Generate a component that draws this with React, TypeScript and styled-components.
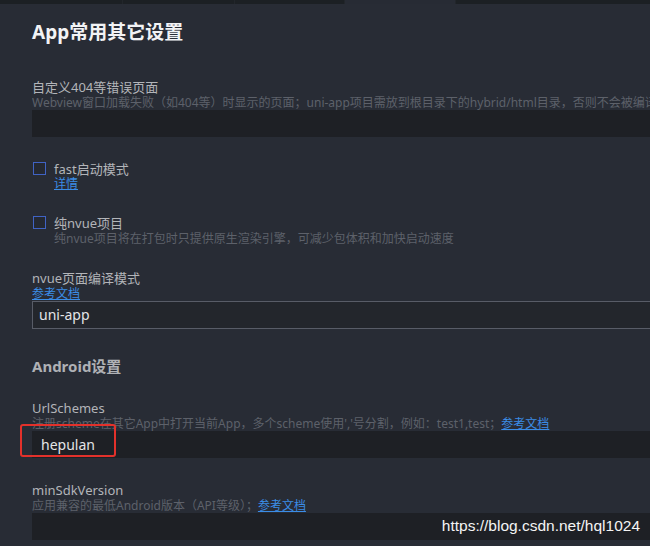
import React from "react"
import styled, { createGlobalStyle } from "styled-components"

const GlobalStyle = createGlobalStyle`
  html, body {
    margin: 0;
    padding: 0;
    background: #282c35;
    overflow: hidden;
  }
  body {
    font-family: "Noto Sans", "Noto Sans CJK SC", sans-serif;
  }
`

type Field = {
  label: string
  desc?: React.ReactNode
  value?: string
  bordered?: boolean
  marked?: boolean
}

const Link: React.FC<{ children: React.ReactNode }> = ({ children }) => <S.DocLink>{children}</S.DocLink>

const FieldBlock: React.FC<Field> = ({ label, desc, value, bordered, marked }) => (
  <S.Group>
    <S.Label>{label}</S.Label>
    {desc && <S.Desc>{desc}</S.Desc>}
    <S.InputWrap>
      <S.Input bordered={bordered}>{value}</S.Input>
      {marked && <S.RedMark />}
    </S.InputWrap>
  </S.Group>
)

const CheckItem: React.FC<{ label: string; children: React.ReactNode }> = ({ label, children }) => (
  <S.CheckRow>
    <S.Box />
    <S.CheckText>
      <S.CheckLabel>{label}</S.CheckLabel>
      {children}
    </S.CheckText>
  </S.CheckRow>
)

export default function App() {
  return (
    <>
      <GlobalStyle />
      <S.Page>
        <S.TabStrip>
          <S.Tab w={122} />
          <S.Tab w={111} />
          <S.Tab w={109} />
          <S.Tab w={110} active />
          <S.Tab w={198} />
        </S.TabStrip>
        <S.Content>
          <S.Title>App常用其它设置</S.Title>
          <FieldBlock
            label="自定义404等错误页面"
            desc="Webview窗口加载失败（如404等）时显示的页面；uni-app项目需放到根目录下的hybrid/html目录，否则不会被编译进去"
          />
          <CheckItem label="fast启动模式">
            <S.SubLink>详情</S.SubLink>
          </CheckItem>
          <CheckItem label="纯nvue项目">
            <S.Desc>纯nvue项目将在打包时只提供原生渲染引擎，可减少包体积和加快启动速度</S.Desc>
          </CheckItem>
          <FieldBlock
            label="nvue页面编译模式"
            desc={<Link>参考文档</Link>}
            value="uni-app"
            bordered
          />
          <S.Section>Android设置</S.Section>
          <FieldBlock
            label="UrlSchemes"
            desc={
              <>
                注册scheme在其它App中打开当前App，多个scheme使用','号分割，例如：test1,test；<Link>参考文档</Link>
              </>
            }
            value="hepulan"
            marked
          />
          <FieldBlock
            label="minSdkVersion"
            desc={
              <>
                应用兼容的最低Android版本（API等级）；<Link>参考文档</Link>
              </>
            }
          />
        </S.Content>
        <S.Watermark>https://blog.csdn.net/hql1024</S.Watermark>
      </S.Page>
    </>
  )
}

const S = {
  Page: styled.div`
    position: relative;
    width: 650px;
    height: 546px;
    overflow: hidden;
    background: #282c35;
  `,
  TabStrip: styled.div`
    display: flex;
    height: 4px;
  `,
  Tab: styled.div<{ w: number; active?: boolean }>`
    width: ${({ w }) => w}px;
    flex-shrink: 0;
    background: ${({ active }) => (active ? "#272b34" : "#1c2024")};
    border-right: 1px solid #22262b;
  `,
  Content: styled.div`
    display: flex;
    flex-direction: column;
    gap: 24px;
    padding: 15px 0 0 32px;
  `,
  Title: styled.h1`
    margin: 0 0 10px;
    font-size: 19px;
    line-height: 26px;
    font-weight: 700;
    color: #f2f3f5;
  `,
  Group: styled.div`
    display: flex;
    flex-direction: column;
  `,
  Label: styled.div`
    font-size: 13px;
    line-height: 16px;
    color: #b3b5b9;
    white-space: nowrap;
  `,
  Desc: styled.div`
    font-size: 12px;
    line-height: 15px;
    color: #5d616a;
    white-space: nowrap;
    overflow: hidden;
  `,
  DocLink: styled.span`
    color: #3b8de6;
    text-decoration: underline;
  `,
  InputWrap: styled.div`
    position: relative;
  `,
  Input: styled.div<{ bordered?: boolean }>`
    box-sizing: border-box;
    height: ${({ bordered }) => (bordered ? "28px" : "27px")};
    padding-left: ${({ bordered }) => (bordered ? "6px" : "9px")};
    background: ${({ bordered }) => (bordered ? "#23262c" : "#1e2025")};
    border: ${({ bordered }) => (bordered ? "1px solid #585c67" : "none")};
    border-right: none;
    font-size: 14px;
    line-height: ${({ bordered }) => (bordered ? "26px" : "27px")};
    color: #e4e5e7;
  `,
  RedMark: styled.div`
    position: absolute;
    left: -12px;
    top: -7px;
    width: 96px;
    height: 33px;
    box-sizing: border-box;
    border: 2px solid #e3312b;
    border-radius: 3px;
  `,
  CheckRow: styled.div`
    display: flex;
    align-items: flex-start;
    gap: 8px;
  `,
  Box: styled.div`
    width: 13px;
    height: 13px;
    margin: 1px 0 0 1px;
    box-sizing: border-box;
    border: 1px solid #4063c4;
    background: #252932;
    flex-shrink: 0;
  `,
  CheckText: styled.div`
    display: flex;
    flex-direction: column;
  `,
  CheckLabel: styled.div`
    font-size: 13px;
    line-height: 16px;
    color: #b3b5b9;
  `,
  SubLink: styled.span`
    font-size: 12px;
    line-height: 14px;
    color: #3b8de6;
    text-decoration: underline;
  `,
  Section: styled.h2`
    margin: 0;
    padding-top: 3px;
    font-size: 15px;
    line-height: 20px;
    font-weight: 700;
    color: #afb1b5;
  `,
  Watermark: styled.div`
    position: absolute;
    right: 10px;
    bottom: 11px;
    font-family: "Liberation Sans", Arial, sans-serif;
    font-size: 15.5px;
    color: #f4f4f4;
  `,
}
